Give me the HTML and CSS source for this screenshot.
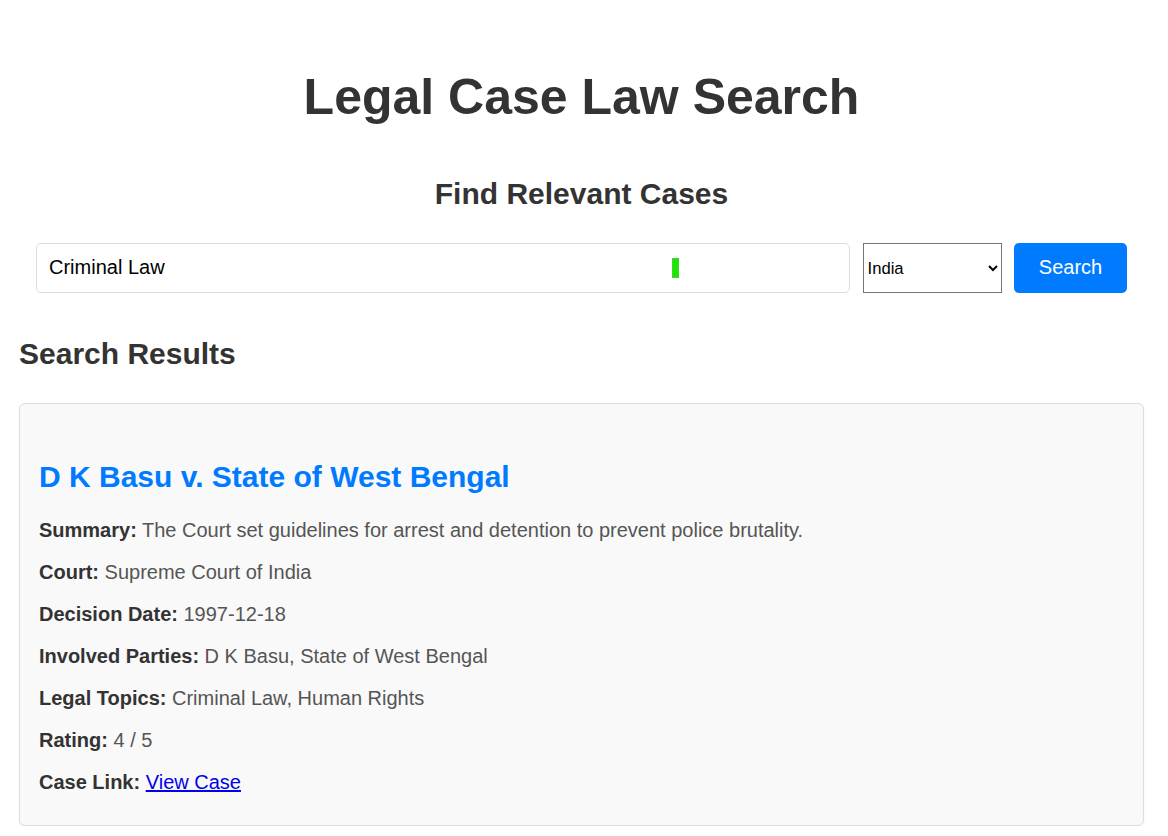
FILE: index.html
```html
<!DOCTYPE html>
<html lang="en">
<head>
<meta charset="utf-8">
<title>Legal Case Law Search</title>
<link rel="stylesheet" href="styles.css">
</head>
<body>
  <h1 class="page-title">Legal Case Law Search</h1>
  <h2 class="subtitle">Find Relevant Cases</h2>
  <form class="search-form">
    <div class="input-wrap">
      <input class="search-input" type="text" value="Criminal Law">
      <span class="marker"></span>
    </div>
    <select class="country-select">
      <option>India</option>
      <option>United States</option>
      <option>United Kingdom</option>
    </select>
    <button class="search-btn" type="button">Search</button>
  </form>
  <h2 class="results-title">Search Results</h2>
  <div class="case-card">
    <h3 class="case-title">D K Basu v. State of West Bengal</h3>
    <p class="field"><strong>Summary:</strong> The Court set guidelines for arrest and detention to prevent police brutality.</p>
    <p class="field"><strong>Court:</strong> Supreme Court of India</p>
    <p class="field"><strong>Decision Date:</strong> 1997-12-18</p>
    <p class="field"><strong>Involved Parties:</strong> D K Basu, State of West Bengal</p>
    <p class="field"><strong>Legal Topics:</strong> Criminal Law, Human Rights</p>
    <p class="field"><strong>Rating:</strong> 4 / 5</p>
    <p class="field"><strong>Case Link:</strong> <a href="#">View Case</a></p>
  </div>
</body>
</html>
```

FILE: styles.css
```css
html, body {
  background: #ffffff;
}
body {
  margin: 0;
  padding: 0 24px 0 19px;
  font-family: "Liberation Sans", Arial, sans-serif;
  color: #333333;
}
.page-title {
  margin: 68px 0 0;
  font-size: 50px;
  line-height: 58px;
  font-weight: bold;
  text-align: center;
  color: #333333;
}
.subtitle {
  margin: 51px 0 0;
  font-size: 30px;
  line-height: 34px;
  font-weight: bold;
  text-align: center;
  color: #333333;
}
.search-form {
  margin: 32px 0 0;
  padding: 0 17px;
  display: flex;
  align-items: stretch;
  gap: 12.5px;
  height: 50px;
}
.input-wrap {
  position: relative;
  flex: 1;
  display: flex;
}
.search-input {
  flex: 1;
  box-sizing: border-box;
  height: 50px;
  margin: 0;
  padding: 0 12px 1px;
  border: 1px solid #dddddd;
  border-radius: 5px;
  font-family: "Liberation Sans", Arial, sans-serif;
  font-size: 20px;
  color: #000000;
  background: #ffffff;
  outline: none;
}
.marker {
  position: absolute;
  left: 636px;
  top: 15px;
  width: 7px;
  height: 20px;
  box-sizing: border-box;
  background: #1fe600;
  border: 1px solid #3cd23c;
}
.country-select {
  box-sizing: border-box;
  width: 139px;
  height: 50px;
  margin: 0;
  font-family: "Liberation Sans", Arial, sans-serif;
  font-size: 16.67px;
  color: #000000;
  background: #ffffff;
  border: 1px solid #767676;
  border-radius: 0;
}
.search-btn {
  box-sizing: border-box;
  width: 113px;
  height: 50px;
  margin: 0;
  padding: 0 0 1px;
  border: none;
  border-radius: 5px;
  background: #007bff;
  color: #ffffff;
  font-family: "Liberation Sans", Arial, sans-serif;
  font-size: 20px;
  cursor: pointer;
}
.results-title {
  margin: 44px 0 0;
  font-size: 30px;
  line-height: 34px;
  font-weight: bold;
  color: #333333;
}
.case-card {
  margin: 32px 0 0;
  padding: 16px 19px;
  background: #f9f9f9;
  border: 1px solid #dddddd;
  border-radius: 6px;
  box-shadow: 0 1px 2px rgba(0, 0, 0, 0.06);
}
.case-title {
  margin: 40px 0 21px;
  font-size: 30px;
  line-height: 34px;
  font-weight: bold;
  color: #007bff;
}
.field {
  margin: 12px 0;
  font-size: 20px;
  line-height: 30px;
  color: #555555;
}
.field strong {
  color: #333333;
}
.field a {
  color: #0000ee;
  text-decoration: underline;
}
```
